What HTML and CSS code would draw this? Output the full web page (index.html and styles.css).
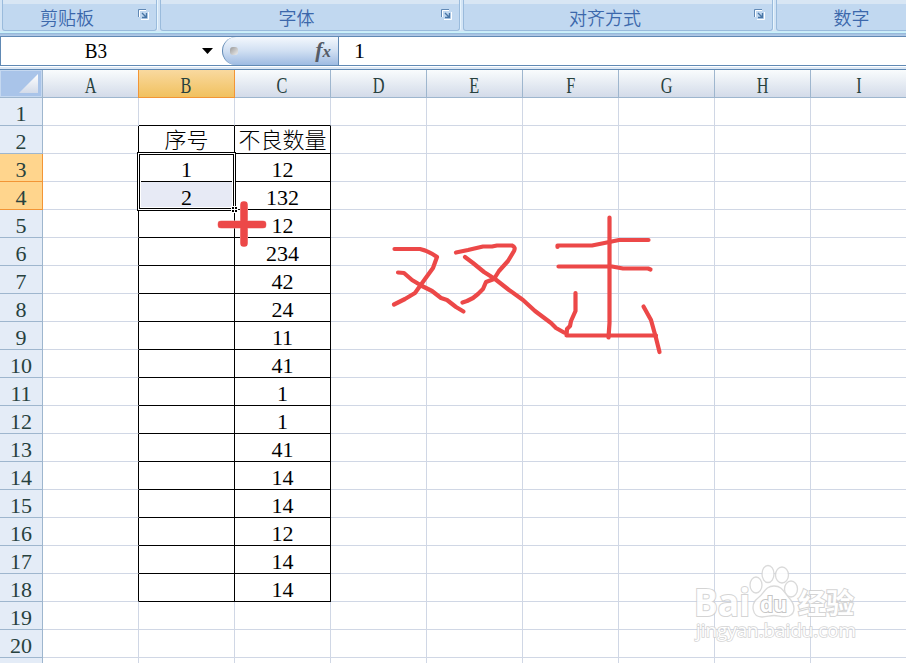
FILE: index.html
```html
<!DOCTYPE html>
<html lang="zh">
<head>
    <meta charset="UTF-8">
    <title>B3</title>
    <link rel="stylesheet" href="styles.css">
</head>
<body>
    <div class="ribbon">
        <div class="group clipboard"><span>剪贴板</span>
            <svg class="launcher" width="11" height="11" viewBox="0 0 11 11"><path d="M1.500 8V1.500H8M10.500 3v7.500H3" fill="none" stroke="#fff"/><path d="M.5 8V.5H8" fill="none" stroke="#6189b5"/><path d="M4 4l4 4M8.500 4v4.500H4" fill="none" stroke="#4976a6" stroke-width="1.400"/></svg>
        </div>
        <div class="group font"><span>字体</span>
            <svg class="launcher" width="11" height="11" viewBox="0 0 11 11"><path d="M1.500 8V1.500H8M10.500 3v7.500H3" fill="none" stroke="#fff"/><path d="M.5 8V.5H8" fill="none" stroke="#6189b5"/><path d="M4 4l4 4M8.500 4v4.500H4" fill="none" stroke="#4976a6" stroke-width="1.400"/></svg>
        </div>
        <div class="group align"><span>对齐方式</span>
            <svg class="launcher" width="11" height="11" viewBox="0 0 11 11"><path d="M1.500 8V1.500H8M10.500 3v7.500H3" fill="none" stroke="#fff"/><path d="M.5 8V.5H8" fill="none" stroke="#6189b5"/><path d="M4 4l4 4M8.500 4v4.500H4" fill="none" stroke="#4976a6" stroke-width="1.400"/></svg>
        </div>
        <div class="group number"><span>数字</span></div>
    </div>

    <div class="formula-bar">
        <div class="name-box"><span>B3</span></div>
        <svg class="arrow" width="12" height="6" viewBox="0 0 12 6"><path d="M0 0h11L5.500 6z"/></svg>
        <div class="fx"><i class="dot"></i><span class="fx-label">f<small>x</small></span></div>
        <div class="formula">1</div>
    </div>

    <div class="sheet">
        <table id="grid"></table>
        <div class="selection"><i class="handle"></i></div>
    </div>

    <svg class="drawing" width="906" height="663" viewBox="0 0 906 663">
        <g fill="none" stroke="#ec4848" stroke-linecap="round" stroke-linejoin="round">
            <path stroke="#f4a0a0" stroke-width="8" d="M221.500 224.500H262.500M244 205V243"/>
            <path stroke-width="7" d="M221.500 224.500H262.500M244 205V243"/>
            <path stroke-width="6" stroke-linecap="square" d="M221.500 224.500H262.500M244 205V243"/>
            <g stroke-width="4.200">
                <path d="M394.500 249H420Q429 251 437 257L433 268L425 279L415 293L405 299L394 304.500"/>
                <path d="M398 272.500L404 273L412 280L422 286L432 291L441 298L447 300L456 307L463.500 311.500"/>
                <path d="M456 252.500L468 250L483 246.500H492L497 245.500H512Q516 247 514 251L508 261L499 271L494 279L486 282L483 289L478 294L473 298L467 301L462.500 302.500"/>
                <path d="M465 257L473 263L484 272L495 279L509 290L523 300L535 311L551 323L556 328L564 332.500"/>
                <path d="M557.500 247V245.500H592L602 243.500L619 240H648.500"/>
                <path d="M558.500 266.500H612L623 268.500H648L650.500 269.500"/>
                <path d="M609.500 217.500V323L608.500 337.500"/>
                <path d="M575.500 293V311L571 321L570 326L567 329L566.500 335.500H656"/>
                <path d="M643.500 306.500L651 320L656 338L659.500 352"/>
            </g>
        </g>
    </svg>

    <svg class="watermark" width="226" height="108" viewBox="0 0 226 108">
        <g fill="#fff" stroke="#d4d4d4" stroke-width="1.300">
            <ellipse cx="76" cy="30" rx="6" ry="8"/>
            <ellipse cx="88" cy="19" rx="6" ry="8.500"/>
            <ellipse cx="102" cy="20" rx="6.500" ry="8"/>
            <ellipse cx="111" cy="34" rx="6.500" ry="8"/>
            <path d="M94 31C85 31 84 39 78 43C70 49 72 62 82 62C87 62 90 60.500 94 60.500C99 60.500 103 63 109 61C116 58 115 50 110 44C104 38 103 31 94 31Z"/>
        </g>
        <g class="wm-text">
            <text x="14" y="61" font-size="37" textLength="56" lengthAdjust="spacingAndGlyphs">Bai</text>
            <text x="80" y="57" font-size="21" textLength="27" lengthAdjust="spacingAndGlyphs" class="wm-du">du</text>
            <text x="118" y="59" font-size="28" textLength="56" lengthAdjust="spacingAndGlyphs">经验</text>
            <text class="wm-url" x="16" y="82" font-size="18" textLength="160" lengthAdjust="spacingAndGlyphs">jingyan.baidu.com</text>
        </g>
    </svg>

    <script src="script.js"></script>
</body>
</html>
```
FILE: styles.css
```css
body {
    margin: 0;
    width: 906px;
    height: 663px;
    overflow: hidden;
    position: relative;
    background: #fff;
    font-family: "Liberation Serif", "Noto Sans CJK SC", serif;
    font-size: 22px;
}

.ribbon {
    display: flex;
    gap: 3px;
    box-sizing: border-box;
    height: 36px;
    padding: 0 0 5px 2px;
    background: linear-gradient(#d3e4f5 0, #d3e4f5 31px, #c9f2fb 32px, #c9f2fb 33px, #8fb4d6 33px, #b0c8e6 35px);
}

.group {
    position: relative;
    box-sizing: border-box;
    flex: none;
    height: 31px;
    border: 1px solid #9abbdc;
    border-top: 0;
    border-radius: 0 0 3px 3px;
    background: linear-gradient(#d8e6f4 0, #d8e6f4 4px, #c1d8f0 4px);
    box-shadow: 1px 0 #e8f5fd;
    color: #3b67ab;
    font-family: "Noto Sans CJK SC", sans-serif;
    font-weight: 350;
    font-size: 18px;
    line-height: 34px;
    text-align: center;
}

.clipboard { width: 155px; padding-right: 25px; }
.font { width: 300px; padding-right: 27px; }
.align { width: 310px; padding-right: 26px; }
.number { width: 151px; }

.launcher {
    position: absolute;
    right: 7px;
    top: 9px;
}

.formula-bar {
    display: flex;
    align-items: center;
    box-sizing: border-box;
    height: 30px;
    border-top: 1px solid #6089b4;
    border-bottom: 1px solid #6089b4;
    border-left: 1px solid #6089b4;
}

.name-box {
    width: 190px;
    text-align: center;
    line-height: 30px;
}

.name-box span {
    display: inline-block;
    transform: scaleX(.87);
}

.arrow {
    margin-left: 11px;
}

.fx {
    display: flex;
    align-items: center;
    justify-content: space-between;
    box-sizing: border-box;
    width: 117px;
    height: 28px;
    margin-left: 8px;
    padding: 0 7px 0 7px;
    border-left: 1px solid #6089b4;
    border-right: 1px solid #6089b4;
    border-radius: 14px 0 0 14px;
    background: linear-gradient(#f4f8fd, #d0dff2 50%, #9ebbe2);
}

.dot {
    width: 8px;
    height: 8px;
    border-radius: 3px;
    background: linear-gradient(135deg, #999, #eee);
}

.fx-label {
    color: #555b66;
    font-style: italic;
    font-weight: bold;
    font-size: 22px;
    line-height: 24px;
}

.fx-label small {
    font-size: 17px;
}

.formula {
    padding-left: 15px;
    line-height: 32px;
}

.sheet {
    position: relative;
    margin-top: 3px;
    border-top: 1px solid #6089b4;
    box-shadow: 0 -2px #dce8f5;
}

#grid {
    width: 907px;
    table-layout: fixed;
    border-collapse: separate;
    border-spacing: 0;
}

#grid th, #grid td {
    box-sizing: border-box;
    height: 28px;
    padding: 4px 0 0;
    border-right: 1px solid #d0d7e5;
    border-bottom: 1px solid #d0d7e5;
    font-weight: normal;
    line-height: 23px;
    text-align: center;
    white-space: nowrap;
}

#grid th {
    border-color: #9eb6ce;
    background: #e4ecf7;
    color: #27413e;
}

#grid thead th {
    background: linear-gradient(#f9fcfd, #d3dbe9);
}

#grid thead th span {
    display: inline-block;
    font-size: 24px;
    transform: scaleX(.68);
}

#grid thead th.corner {
    padding: 0;
    background: #a9c4e9;
    box-shadow: inset 0 0 0 1px #c5d8f0;
}

.corner svg {
    display: block;
    margin: 0 0 0 18px;
}

#grid thead th.active {
    background: linear-gradient(#f9d99f, #f1c15f);
    border-color: #f29536;
    box-shadow: -1px 0 #f29536;
}

#grid tbody th.active {
    background: #ffd58d;
    border-color: #f29536;
}

#grid td.boxed {
    border-color: #000;
}

#grid td.cn {
    padding: 0 0 2px;
    font-family: "Noto Sans CJK SC", sans-serif;
    font-weight: 300;
    line-height: 25px;
}

#grid td.filled {
    background: #e7eaf5;
}

.selection {
    position: absolute;
    left: 138px;
    top: 83px;
    box-sizing: border-box;
    width: 97px;
    height: 57px;
    border: 1px solid #fff;
    outline: 1px solid #000;
    box-shadow: inset 0 0 0 1px #000, inset 0 0 0 2px #fff;
}

.handle {
    position: absolute;
    right: -3px;
    bottom: -3px;
    width: 5px;
    height: 5px;
    background: linear-gradient(#fff, #fff) 2px 0 / 1px 5px no-repeat, linear-gradient(#fff, #fff) 0 2px / 5px 1px no-repeat, #000;
    outline: 1px solid #fff;
}

.drawing {
    position: absolute;
    left: 0;
    top: 0;
}

.watermark {
    position: absolute;
    left: 680px;
    top: 555px;
    opacity: .85;
}

.wm-text {
    fill: #fff;
    stroke: #cdcdcd;
    stroke-width: 2px;
    paint-order: stroke;
    font-family: "Open Sans", "Noto Sans CJK SC", sans-serif;
    font-weight: bold;
}

.wm-du {
    stroke: #bbb;
}

.wm-url {
    font-weight: normal;
    stroke-width: 1.5px;
}
```
FILE: script.js
```js
let columns = ["A", "B", "C", "D", "E", "F", "G", "H", "I"];
let amounts = ["不良数量", 12, 132, 12, 234, 42, 24, 11, 41, 1, 1, 41, 14, 14, 12, 14, 14];
let numbers = { 2: "序号", 3: 1, 4: 2 };

let html = '<colgroup><col style="width:43px">';
for (let i = 0; i < columns.length; i++) {
    html += '<col style="width:96px">';
}
html += '</colgroup><thead><tr><th class="corner"><svg width="20" height="20"><defs><linearGradient id="tri" x2="0" y2="1"><stop stop-color="#fff"/><stop offset="1" stop-color="#d3dbe9"/></linearGradient></defs><path d="M20 0v19H1z" fill="url(#tri)"/></svg></th>';
for (let name of columns) {
    html += '<th class="' + (name === "B" ? "active" : "") + '"><span>' + name + '</span></th>';
}
html += '</tr></thead><tbody>';

// the last row is only a sliver at the bottom, so it gets no number
for (let row = 1; row <= 21; row++) {
    html += '<tr><th class="' + (row === 3 || row === 4 ? "active" : "") + '">' + (row < 21 ? row : "") + '</th>';
    for (let name of columns) {
        let text = "";
        let classes = [];
        let style = "";
        if (row >= 2 && row <= 18) {
            if (name === "B") text = numbers[row] || "";
            if (name === "C") text = amounts[row - 2];
            if (name === "B" || name === "C") classes.push("boxed");
            if (name === "A") style = "border-right-color:#000";
        }
        if (row === 1 && (name === "B" || name === "C")) {
            style = "border-bottom-color:#000";
        }
        if (row === 2) classes.push("cn");
        if (row === 4 && name === "B") classes.push("filled");
        html += '<td class="' + classes.join(" ") + '" style="' + style + '">' + text + '</td>';
    }
    html += '</tr>';
}
document.getElementById("grid").innerHTML = html + '</tbody>';
```
